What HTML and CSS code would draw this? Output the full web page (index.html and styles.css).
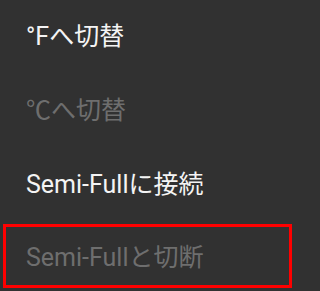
FILE: index.html
```html
<!DOCTYPE html>
<html lang="ja">
<head>
<meta charset="utf-8">
<link rel="stylesheet" href="styles.css">
</head>
<body>
<div class="menu">
  <div class="item">°Fへ切替</div>
  <div class="item disabled">℃へ切替</div>
  <div class="item">Semi-Fullに接続</div>
  <div class="item disabled">Semi-Fullと切断</div>
  <div class="highlight"></div>
</div>
</body>
</html>
```

FILE: styles.css
```css
html, body {
  margin: 0;
  padding: 0;
  background: #313131;
}
.menu {
  position: relative;
  width: 298px;
  height: 291px;
  overflow: hidden;
  background: #313131;
  font-family: Roboto, "Noto Sans CJK JP", sans-serif;
  font-size: 25px;
  display: flex;
  flex-direction: column;
}
.item {
  flex: 0 0 73.7px;
  display: flex;
  align-items: center;
  padding-left: 26px;
  line-height: 29px;
  color: #f4f4f4;
  white-space: nowrap;
}
.item.disabled {
  color: #6e6e6e;
}
.highlight {
  position: absolute;
  left: 3px;
  top: 224px;
  width: 283px;
  height: 58px;
  border: 3px solid #ff0000;
}
```
